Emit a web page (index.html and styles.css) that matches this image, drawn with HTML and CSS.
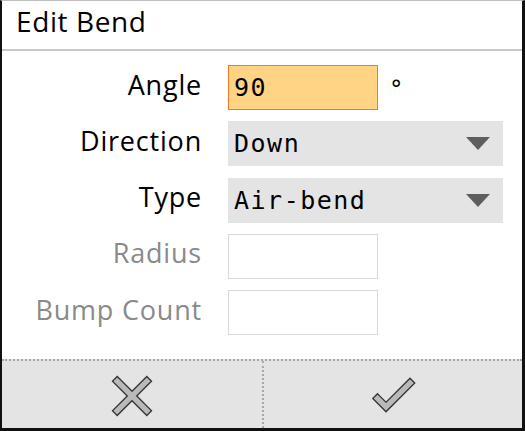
FILE: index.html
```html
<!DOCTYPE html>
<html>
<head>
<meta charset="utf-8">
<link rel="stylesheet" href="styles.css">
</head>
<body>
<div class="dialog">
  <div class="title">Edit Bend</div>
  <div class="form">
    <div class="label">Angle</div>
    <div class="field">
      <div class="input active">90</div>
      <span class="unit">°</span>
    </div>
    <div class="label">Direction</div>
    <div class="field">
      <div class="select">Down<span class="arrow"></span></div>
    </div>
    <div class="label">Type</div>
    <div class="field">
      <div class="select">Air-bend<span class="arrow"></span></div>
    </div>
    <div class="label disabled">Radius</div>
    <div class="field">
      <div class="input empty"></div>
    </div>
    <div class="label disabled">Bump Count</div>
    <div class="field">
      <div class="input empty"></div>
    </div>
  </div>
  <div class="footer">
    <div class="btn cancel">
      <svg width="48" height="48" viewBox="0 0 48 48">
        <g stroke-linecap="square" fill="none">
          <line x1="9.2" y1="9.2" x2="38.8" y2="38.8" stroke="#333" stroke-width="8"/>
          <line x1="38.8" y1="9.2" x2="9.2" y2="38.8" stroke="#333" stroke-width="8"/>
          <line x1="9.2" y1="9.2" x2="38.8" y2="38.8" stroke="#b9b9b9" stroke-width="5.4"/>
          <line x1="38.8" y1="9.2" x2="9.2" y2="38.8" stroke="#b9b9b9" stroke-width="5.4"/>
        </g>
      </svg>
    </div>
    <div class="btn ok">
      <svg width="48" height="48" viewBox="0 0 48 48">
        <g stroke-linecap="square" stroke-linejoin="miter" fill="none">
          <polyline points="8.5,26.5 17,35 41,11" stroke="#333" stroke-width="8"/>
          <polyline points="8.5,26.5 17,35 41,11" stroke="#b9b9b9" stroke-width="5.4"/>
        </g>
      </svg>
    </div>
  </div>
</div>
</body>
</html>
```
FILE: styles.css
```css
html, body {
  margin: 0;
  padding: 0;
  background: #fff;
}
.dialog {
  width: 525px;
  height: 431px;
  box-sizing: border-box;
  border-left: 2px solid #111;
  border-right: 3px solid #111;
  border-bottom: 3px solid #111;
  border-top: 1px solid #c0c0c0;
  display: flex;
  flex-direction: column;
  font-family: "Open Sans", "DejaVu Sans", sans-serif;
  color: #000;
}
.title {
  height: 50px;
  flex: 0 0 auto;
  box-sizing: border-box;
  border-bottom: 2px solid #c8c8c8;
  padding-left: 14px;
  padding-bottom: 8px;
  display: flex;
  align-items: center;
  font-size: 28px;
  letter-spacing: 0.6px;
}
.form {
  flex: 1;
  padding-top: 14px;
  display: grid;
  grid-template-columns: 200px 1fr;
  grid-auto-rows: 45px;
  column-gap: 26px;
  row-gap: 11.3px;
  align-content: start;
}
.label {
  font-size: 27px;
  letter-spacing: 0.8px;
  text-align: right;
  display: flex;
  align-items: center;
  justify-content: flex-end;
  padding-bottom: 7px;
  box-sizing: border-box;
}
.label.disabled {
  color: #8a8a8a;
}
.field {
  display: flex;
  align-items: center;
}
.input {
  width: 150px;
  height: 45px;
  box-sizing: border-box;
  border: 1px solid #d9d9d9;
  background: #fff;
  font-family: "DejaVu Sans Mono", monospace;
  font-size: 25px;
  letter-spacing: 1.5px;
  display: flex;
  align-items: center;
  padding-left: 5px;
}
.input.active {
  background: #ffd485;
  border-color: #ef7a2a;
}
.unit {
  margin-left: 11px;
  font-family: "DejaVu Sans Mono", monospace;
  font-size: 24px;
  line-height: 45px;
  align-self: stretch;
  padding-top: 3px;
}
.select {
  width: 275px;
  height: 45px;
  box-sizing: border-box;
  background: #e4e4e4;
  font-family: "DejaVu Sans Mono", monospace;
  font-size: 25px;
  letter-spacing: 1.5px;
  display: flex;
  align-items: center;
  justify-content: space-between;
  padding-left: 6px;
  padding-right: 13px;
}
.arrow {
  width: 0;
  height: 0;
  border-left: 12px solid transparent;
  border-right: 12px solid transparent;
  border-top: 13px solid #5e5e5e;
}
.footer {
  height: 69px;
  flex: 0 0 auto;
  box-sizing: border-box;
  border-top: 2px dotted #a8a8a8;
  background: #e4e4e4;
  display: flex;
}
.btn {
  display: flex;
  align-items: center;
  justify-content: center;
  padding-top: 3px;
}
.btn.cancel {
  width: 260px;
  border-right: 2px dotted #a8a8a8;
}
.btn.ok {
  flex: 1;
}
```
